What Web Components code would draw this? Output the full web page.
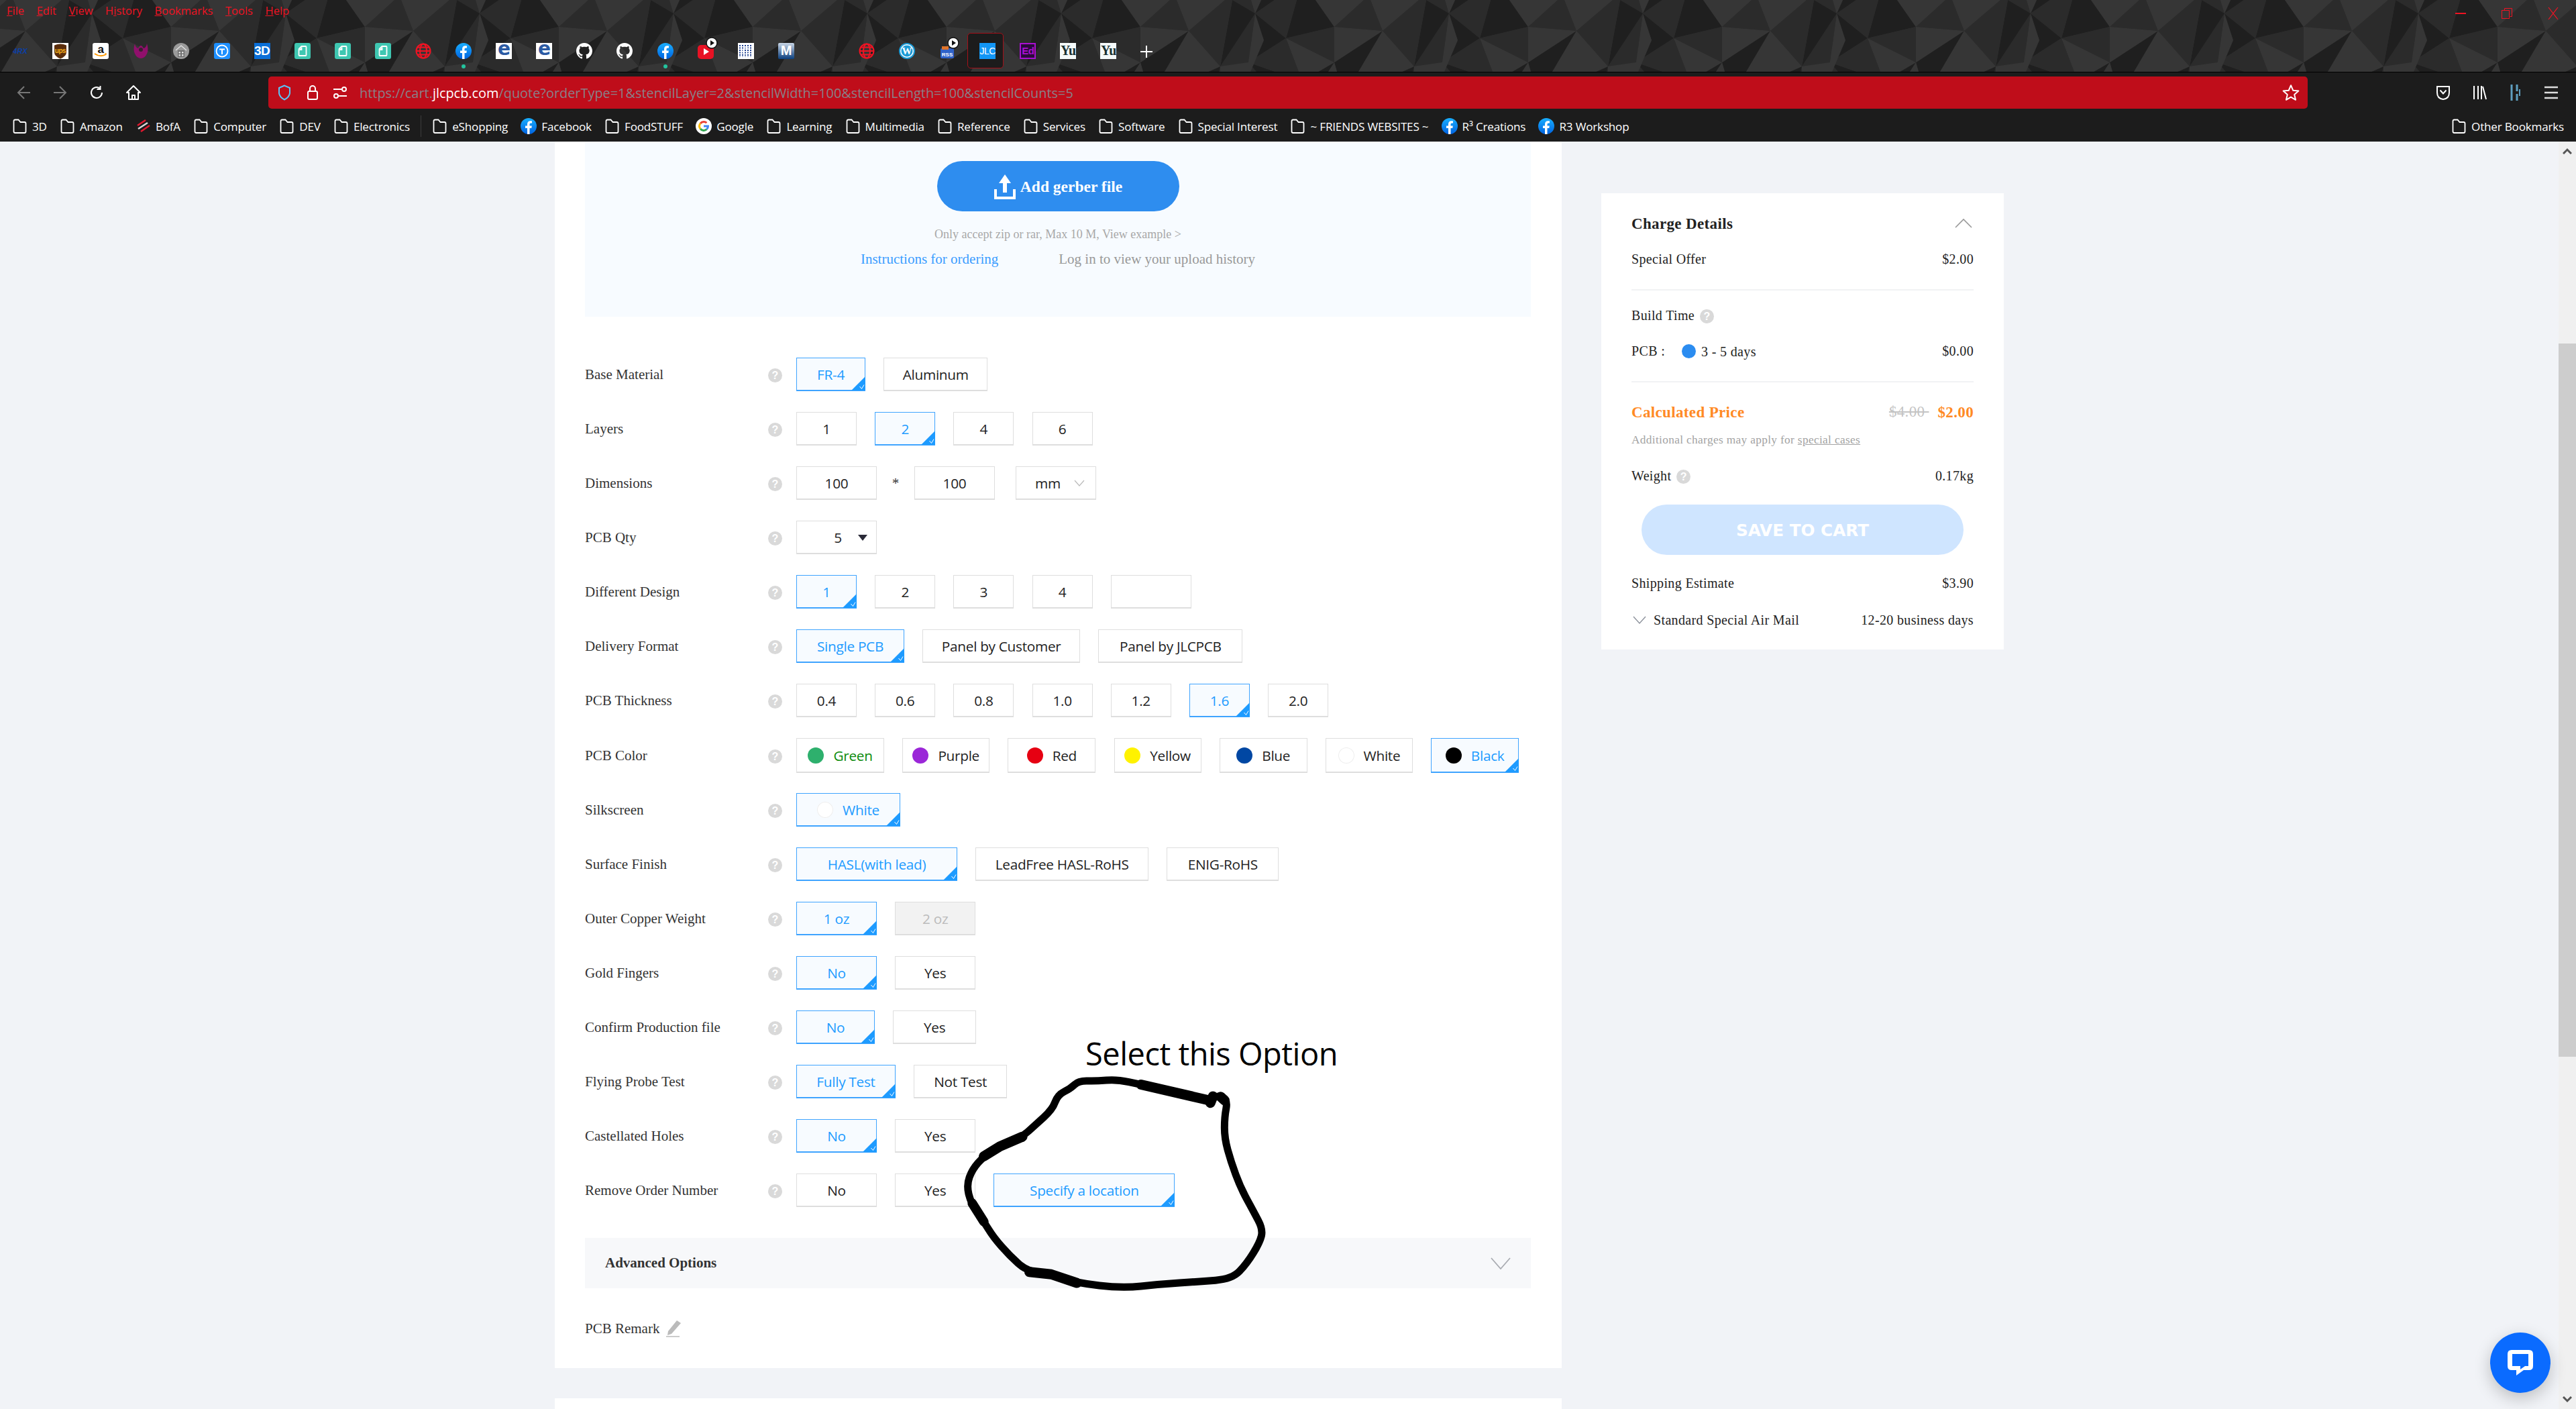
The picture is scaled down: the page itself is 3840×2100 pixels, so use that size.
<!DOCTYPE html>
<html>
<head>
<meta charset="utf-8">
<title>JLCPCB quote</title>
<style>
  html, body { margin: 0; padding: 0; width: 3840px; height: 2100px; overflow: hidden; background: #f1f3f7; }
  browser-chrome, quote-page { display: block; }
</style>
</head>
<body>
<browser-chrome></browser-chrome>
<quote-page>
  <upload-panel></upload-panel>

  <spec-row label="Base Material"><opt-btn w="103" on>FR-4</opt-btn><opt-btn w="155">Aluminum</opt-btn></spec-row>
  <spec-row label="Layers"><opt-btn w="90">1</opt-btn><opt-btn w="90" on>2</opt-btn><opt-btn w="90">4</opt-btn><opt-btn w="90">6</opt-btn></spec-row>
  <spec-row label="Dimensions" style="--gap:0px"><opt-btn w="120">100</opt-btn><dim-star></dim-star><opt-btn w="120">100</opt-btn><opt-btn w="120" style="margin-left:31px" caret="chev">mm</opt-btn></spec-row>
  <spec-row label="PCB Qty"><opt-btn w="120" caret="solid">5</opt-btn></spec-row>
  <spec-row label="Different Design"><opt-btn w="90" on>1</opt-btn><opt-btn w="90">2</opt-btn><opt-btn w="90">3</opt-btn><opt-btn w="90">4</opt-btn><opt-btn w="120"></opt-btn></spec-row>
  <spec-row label="Delivery Format"><opt-btn w="161" on>Single PCB</opt-btn><opt-btn w="235">Panel by Customer</opt-btn><opt-btn w="215">Panel by JLCPCB</opt-btn></spec-row>
  <spec-row label="PCB Thickness"><opt-btn w="90">0.4</opt-btn><opt-btn w="90">0.6</opt-btn><opt-btn w="90">0.8</opt-btn><opt-btn w="90">1.0</opt-btn><opt-btn w="90">1.2</opt-btn><opt-btn w="90" on>1.6</opt-btn><opt-btn w="90">2.0</opt-btn></spec-row>
  <spec-row label="PCB Color" tall>
    <opt-btn w="131" h="52" dot="#2eb06d" ink="#0a8a0a">Green</opt-btn><opt-btn w="130" h="52" dot="#9b27d8">Purple</opt-btn><opt-btn w="131" h="52" dot="#e60012">Red</opt-btn><opt-btn w="130" h="52" dot="#fff200">Yellow</opt-btn><opt-btn w="131" h="52" dot="#0047a3">Blue</opt-btn><opt-btn w="130" h="52" dot="#ffffff">White</opt-btn><opt-btn w="131" h="52" dot="#000000" on>Black</opt-btn>
  </spec-row>
  <spec-row label="Silkscreen"><opt-btn w="155" dot="#ffffff" on>White</opt-btn></spec-row>
  <spec-row label="Surface Finish"><opt-btn w="240" on>HASL(with lead)</opt-btn><opt-btn w="258">LeadFree HASL-RoHS</opt-btn><opt-btn w="167">ENIG-RoHS</opt-btn></spec-row>
  <spec-row label="Outer Copper Weight"><opt-btn w="120" on>1 oz</opt-btn><opt-btn w="120" off>2 oz</opt-btn></spec-row>
  <spec-row label="Gold Fingers"><opt-btn w="120" on>No</opt-btn><opt-btn w="120">Yes</opt-btn></spec-row>
  <spec-row label="Confirm Production file"><opt-btn w="117" on>No</opt-btn><opt-btn w="124">Yes</opt-btn></spec-row>
  <spec-row label="Flying Probe Test"><opt-btn w="148" on>Fully Test</opt-btn><opt-btn w="139">Not Test</opt-btn></spec-row>
  <spec-row label="Castellated Holes"><opt-btn w="120" on>No</opt-btn><opt-btn w="120">Yes</opt-btn></spec-row>
  <spec-row label="Remove Order Number"><opt-btn w="120">No</opt-btn><opt-btn w="120">Yes</opt-btn><opt-btn w="270" on>Specify a location</opt-btn></spec-row>

  <advanced-bar slot="tail"></advanced-bar>
  <remark-row slot="tail"></remark-row>

  <charge-card slot="side"></charge-card>
</quote-page>
<anno-layer></anno-layer>
<chat-fab></chat-fab>

<script>
class ShadowBase extends HTMLElement {
  constructor() {
    super();
    this.attachShadow({ mode: "open" });
  }
  connectedCallback() {
    this.render();
  }
  render() {
    const template = document.createElement('template');
    template.innerHTML = `<style>${this.getStyles()}</style>${this.getTemplate()}`;
    this.shadowRoot.appendChild(template.content.cloneNode(true));
  }
}

const FOLDER = `<svg width="23" height="24" viewBox="0 0 23 24"><path d="M2.5 4.5q0-2 2-2h5l3 3.5h6q2 0 2 2v12q0 2-2 2h-14q-2 0-2-2z" fill="none" stroke="#fff" stroke-width="1.8"/></svg>`;
const FB = `<svg width="24" height="24" viewBox="0 0 24 24"><defs><linearGradient id="fb" x1="0" y1="0" x2="0" y2="1"><stop offset="0" stop-color="#19afff"/><stop offset="1" stop-color="#0062e0"/></linearGradient></defs><circle cx="12" cy="12" r="12" fill="url(#fb)"/><path d="M10 24v-9H7v-3.500h3V9c0-3 1.800-4.700 4.500-4.700 1.300 0 2.500.2 2.500.2v3h-1.500c-1.500 0-2 .9-2 1.900v2.100h3.300l-.5 3.500h-2.800v9z" fill="#fff"/></svg>`;
const GH = `<svg width="24" height="24" viewBox="0 0 16 16"><path fill="#fff" d="M8 0C3.580 0 0 3.580 0 8c0 3.540 2.290 6.530 5.470 7.590.4.070.55-.17.55-.38 0-.19-.01-.82-.01-1.490-2.010.37-2.530-.49-2.690-.94-.09-.23-.48-.94-.82-1.130-.28-.15-.68-.52-.01-.53.63-.01 1.080.58 1.230.82.720 1.210 1.870.870 2.330.660.070-.52.280-.870.510-1.070-1.780-.2-3.640-.89-3.640-3.950 0-.87.310-1.590.820-2.150-.08-.2-.36-1.020.08-2.120 0 0 .67-.21 2.200.820.640-.18 1.320-.27 2-.27s1.360.09 2 .27c1.530-1.040 2.200-.820 2.200-.820.440 1.100.160 1.920.080 2.120.510.560.820 1.270.820 2.150 0 3.070-1.870 3.750-3.650 3.950.290.250.540.730.540 1.480 0 1.070-.01 1.930-.01 2.200 0 .210.150.460.550.380A8 8 0 0 0 16 8c0-4.420-3.580-8-8-8z"/></svg>`;
const GLOBE = `<svg width="24" height="24" viewBox="0 0 24 24" fill="none" stroke="#f01323" stroke-width="2"><circle cx="12" cy="12" r="10.500"/><ellipse cx="12" cy="12" rx="5" ry="10.500"/><path d="M1.500 12h21M3 6.500h18M3 17.500h18"/></svg>`;
const PAGE = `<span class="sq" style="background:#3fc7b2"><svg width="24" height="24" viewBox="0 0 24 24"><path d="M7.500 8l3-3h6q1 0 1 1v12q0 1-1 1h-9q-1 0-1-1v-9z M10 10h-1.500l2-2v2z" fill="none" stroke="#fff" stroke-width="1.800"/></svg></span>`;
const PLAY = `<svg class="play" width="18" height="18" viewBox="0 0 18 18"><circle cx="9" cy="9" r="8" fill="#fff" stroke="#111" stroke-width="1.500"/><path d="M7 5l6 4-6 4z" fill="#111"/></svg>`;

const TAB_ICONS = {
  rx: `<span class="txt" style="color:#0b3fa8;font:italic bold 11px 'Liberation Sans',sans-serif;">4RX</span>`,
  ups: `<span class="sq" style="background:#fff;border-radius:0"><svg width="24" height="24" viewBox="0 0 24 24"><path d="M3 3.500Q12-.5 21 3.500V14q0 6-9 9.500Q3 20 3 14z" fill="#5a2d0c"/><text x="12" y="15" text-anchor="middle" font-family="Liberation Sans,sans-serif" font-weight="700" font-size="10" fill="#f6b221">ups</text></svg></span>`,
  amazon: `<span class="sq" style="background:#fff"><svg width="24" height="24" viewBox="0 0 24 24"><text x="12" y="15" text-anchor="middle" font-family="Liberation Sans,sans-serif" font-weight="700" font-size="17" fill="#111">a</text><path d="M3 16q9 6 17 1" fill="none" stroke="#f90" stroke-width="2"/><path d="M18 15l3 .5-1 3z" fill="#f90"/></svg></span>`,
  phoenix: `<svg width="24" height="24" viewBox="0 0 24 24"><path d="M3 1q1 6 5 7 2-4 4-4t4 4q4-1 5-7 3 9 0 15-3 7-9 7T3 16Q0 10 3 1z" fill="#90106c"/><circle cx="12" cy="10" r="3" fill="#3a2030"/></svg>`,
  home: `<svg width="24" height="24" viewBox="0 0 24 24"><circle cx="12" cy="12" r="12" fill="#9a9a9a"/><path d="M4 11l8-7 8 7" fill="none" stroke="#e8e8e8" stroke-width="1.200"/><rect x="7" y="11" width="10" height="10" fill="#6f6f6f"/><path d="M8.500 13h2.500v2.500H8.500zM13 13h2.500v2.500H13zM8.500 17h2.500v2.500H8.500zM13 17h2.500v2.500H13z" fill="#e0e0e0"/></svg>`,
  tcircle: `<span class="sq" style="background:#1e90ff"><svg width="24" height="24" viewBox="0 0 24 24"><circle cx="12" cy="12" r="8.500" fill="none" stroke="#fff" stroke-width="1.800"/><path d="M8 8.500h8v2h-3V17h-2v-6.500H8z" fill="#fff"/></svg></span>`,
  d3: `<span class="sq" style="background:#0a6fd8;border-radius:0;color:#fff;font:700 19px 'Liberation Sans',sans-serif;">3D</span>`,
  page: PAGE,
  globe: GLOBE,
  fb: FB + `<i class="dot"></i>`,
  e: `<span class="sq" style="background:#fff;border-radius:0;color:#2b5aa3;font:700 28px/24px 'DejaVu Sans',sans-serif;padding-bottom:5px;box-sizing:border-box;">e</span>`,
  gh: GH,
  yt: `<svg width="24" height="24" viewBox="0 0 24 24"><rect x="0" y="3" width="24" height="21" rx="5" fill="#e81224"/><path d="M9 8l8 5-8 5z" fill="#fff"/></svg>` + PLAY,
  irs: `<span class="sq" style="background:#fff;border-radius:0"><svg width="24" height="24" viewBox="0 0 24 24"><g fill="none" stroke="#1d3f8f" stroke-width="2" stroke-dasharray="2 1.500"><path d="M3 3v18M7 3v18M11 3v18M15 3v18M19 3v18"/></g><circle cx="12" cy="12" r="5" fill="none" stroke="#fff" stroke-width="1"/></svg></span>`,
  m: `<span class="sq" style="background:linear-gradient(#c9d6e6,#0b3f7e);border-radius:2px;color:#fff;font:700 20px 'Liberation Sans',sans-serif;">M</span>`,
  wp: `<svg width="24" height="24" viewBox="0 0 24 24"><circle cx="12" cy="12" r="11" fill="#fff" stroke="#1a9ad6" stroke-width="2"/><circle cx="12" cy="12" r="8.500" fill="#1a9ad6"/><text x="12" y="17" text-anchor="middle" font-family="Liberation Serif,serif" font-weight="700" font-size="15" fill="#fff">W</text></svg>`,
  rss: `<svg width="24" height="24" viewBox="0 0 24 24"><rect x="2" y="8" width="20" height="15" rx="2" fill="#2f62c8"/><rect x="4" y="5" width="10" height="5" fill="#e0742a"/><text x="12" y="20" text-anchor="middle" font-family="Liberation Sans,sans-serif" font-weight="700" font-size="8" fill="#fff">RSS</text></svg>` + PLAY,
  jlc: `<span class="sq" style="background:#1296f5;border-radius:0;color:#fff;font:400 14px 'Liberation Sans',sans-serif;">JLC</span>`,
  ed: `<span class="sq" style="background:#2a0a3a;border:2px solid #a80fd0;box-sizing:border-box;border-radius:0;color:#a80fd0;font:700 15px 'Liberation Sans',sans-serif;">Ed</span>`,
  yu: `<span class="sq" style="background:#f5fafa;border-radius:0;color:#173030;font:700 20px 'Liberation Serif',serif;">Yu</span>`
};

class TabIcon extends ShadowBase {
  getTemplate() {
    return `<div class="ic">${TAB_ICONS[this.getAttribute('kind')]}</div>`;
  }
  getStyles() {
    return `
      :host { display: flex; align-items: center; justify-content: center; width: 60.100px; height: 53px; flex: none; position: relative; }
      :host([active]) .ic::before { content: ""; position: absolute; left: -18px; top: -15px; width: 52px; height: 51px; background: #1c1c1c; border: 1px solid #a51019; border-radius: 5px; }
      .ic { position: relative; width: 24px; height: 24px; display: flex; align-items: center; justify-content: center; }
      .ic > svg { position: relative; flex: none; }
      .ic > svg.play { position: absolute; right: -6px; top: -9px; }
      .sq { position: relative; width: 24px; height: 24px; flex: none; border-radius: 3px; display: flex; align-items: center; justify-content: center; letter-spacing: -.5px; }
      .txt { position: relative; }
      .dot { position: absolute; left: 9px; top: 32px; width: 6px; height: 6px; border-radius: 50%; background: #23c49e; }
    `;
  }
}
customElements.define('tab-icon', TabIcon);

class TabStrip extends ShadowBase {
  getTemplate() {
    const first = ['rx','ups','amazon','phoenix','home','tcircle','d3','page','page','page','globe','fb','e','e','gh','gh','fb','yt','irs','m'];
    const second = ['globe','wp','rss','jlc','ed','yu','yu'];
    const row = list => list.map(k => `<tab-icon kind="${k}"${k === 'jlc' ? ' active' : ''}></tab-icon>`).join('');
    return `
      <svg class="poly" width="3840" height="107">
        <defs>
          <g id="t">
            <rect x="-20" y="0" width="340" height="107" fill="#2b2b2b"/>
            <path fill="#1f1f1f" d="M293 0L327 20L275 99ZM47 0L38 20L67 0ZM100 0L84 57L156 40L128 0ZM38 20L28 93L84 57ZM228 46L156 93L160 107L192 107ZM28 93L68 107L40 107ZM156 93L132 107L147 107ZM275 99L257 107L273 107Z"/>
            <path fill="#363636" d="M327 20L317 93L275 99L275 107L320 107L340 60ZM32 0L38 20L47 0ZM128 0L156 40L200 0ZM210 0L228 46L282 0ZM156 40L228 46L156 93ZM228 46L275 99L257 107L192 107ZM84 57L156 93L132 107L103 107ZM156 93L147 107L160 107Z"/>
            <path fill="#2b2b2b" d="M67 0L38 20L84 57L100 0ZM200 0L156 40L228 46L210 0ZM282 0L228 46L275 99L293 0ZM84 57L156 40L156 93ZM28 93L84 57L103 107L68 107Z"/>
          </g>
          <pattern id="low" patternUnits="userSpaceOnUse" x="99" y="0" width="289" height="107">
            <use href="#t"/><use href="#t" x="-289"/>
          </pattern>
        </defs>
        <rect width="3840" height="107" fill="url(#low)"/>
      </svg>
      <nav class="menu"><span><u>F</u>ile</span><span><u>E</u>dit</span><span><u>V</u>iew</span><span>H<u>i</u>story</span><span><u>B</u>ookmarks</span><span><u>T</u>ools</span><span><u>H</u>elp</span></nav>
      <div class="win">
        <svg width="16" height="16" viewBox="0 0 16 16"><path d="M0 8h16" stroke="#f01323" stroke-width="2"/></svg>
        <svg width="16" height="16" viewBox="0 0 16 16" fill="none" stroke="#f01323" stroke-width="1"><path d="M4.500 3.500V.5h11v12h-3"/><rect x=".5" y="3.500" width="11" height="12"/></svg>
        <svg width="16" height="20" viewBox="0 0 16 20"><path d="M1 1l14 18M15 1L1 19" stroke="#f01323" stroke-width="1.200"/></svg>
      </div>
      <div class="tabs">${row(first)}<span class="gap"></span>${row(second)}
        <svg class="plus" width="20" height="20" viewBox="0 0 20 20"><path d="M10 1v18M1 10h18" stroke="#fff" stroke-width="2"/></svg>
      </div>
    `;
  }
  getStyles() {
    return `
      :host { display: block; position: relative; height: 107px; background: #2b2b2b; border-bottom: 1px solid #000; overflow: hidden; }
      .poly { position: absolute; left: 0; top: 0; }
      .menu { position: relative; display: flex; gap: 18.500px; padding: 4px 0 0 10px; font: 16.500px/24px "Open Sans", sans-serif; color: #f01323; }
      .win { position: absolute; right: 26px; top: 10px; display: flex; gap: 53px; align-items: center; }
      .tabs { position: absolute; left: 0; top: 49px; display: flex; }
      .gap { width: 60px; flex: none; }
      .plus { align-self: center; margin-left: 16px; margin-top: 2px; }
    `;
  }
}
customElements.define('tab-strip', TabStrip);

class NavBar extends ShadowBase {
  getTemplate() {
    return `
      <svg class="nb" width="20" height="22" viewBox="0 0 20 22" style="margin-left:25px"><path d="M11 2L2 11l9 9M2 11h18" fill="none" stroke="#777" stroke-width="2"/></svg>
      <svg class="nb" width="20" height="22" viewBox="0 0 20 22" style="margin-left:35px"><path d="M9 2l9 9-9 9M18 11H0" fill="none" stroke="#777" stroke-width="2"/></svg>
      <svg class="nb" width="22" height="22" viewBox="0 0 22 22" style="margin-left:33px"><path d="M19 11a8 8 0 1 1-3-6.200M16.500 1v5h-5" fill="none" stroke="#fff" stroke-width="2"/></svg>
      <svg class="nb" width="24" height="24" viewBox="0 0 24 24" style="margin-left:32px"><path d="M12 2L2 12h3v10h14V12h3zM10 22v-6h4v6" fill="none" stroke="#fff" stroke-width="2" stroke-linejoin="round"/></svg>
      <div class="url">
        <svg width="20" height="24" viewBox="0 0 20 24" style="margin-left:14px"><path d="M10 1.500L2 5v8q1 6 8 9.500 7-3.500 8-9.500V5z" fill="none" stroke="#5bc3f5" stroke-width="2"/></svg>
        <svg width="18" height="24" viewBox="0 0 18 24" style="margin-left:23px"><rect x="2" y="10" width="14" height="12" rx="2" fill="none" stroke="#fff" stroke-width="2"/><path d="M5 10V6a4 4 0 0 1 8 0v4" fill="none" stroke="#fff" stroke-width="2"/></svg>
        <svg width="22" height="20" viewBox="0 0 22 20" style="margin-left:21px"><g fill="none" stroke="#fff" stroke-width="2"><circle cx="17" cy="5" r="3"/><circle cx="5" cy="15" r="3"/><path d="M1 5h12M9 15h12"/></g></svg>
        <span class="addr">https://cart.<b>jlcpcb.com</b>/quote?orderType=1&amp;stencilLayer=2&amp;stencilWidth=100&amp;stencilLength=100&amp;stencilCounts=5</span>
        <svg class="star" width="26" height="26" viewBox="0 0 24 24"><path d="M12 2l3 7 7.500.7-5.700 5 1.700 7.300-6.500-3.900L5.500 22l1.700-7.300-5.700-5L9 9z" fill="none" stroke="#fff" stroke-width="1.800" stroke-linejoin="round"/></svg>
      </div>
      <div class="right">
        <svg width="22" height="24" viewBox="0 0 22 24"><path d="M2 3h18v9q0 9-9 10Q2 21 2 12z" fill="none" stroke="#fff" stroke-width="2"/><path d="M6.500 8.500l4.500 5 4.500-5" fill="none" stroke="#fff" stroke-width="2"/></svg>
        <svg width="22" height="24" viewBox="0 0 22 24" stroke="#fff" stroke-width="2"><path d="M3 2v20M9 2v20M14 2v20M16 3l5 19" fill="none"/></svg>
        <svg width="22" height="26" viewBox="0 0 22 26" stroke="#5f9fc0" stroke-width="3"><path d="M5 1v24M13 1v10M13 15v10" fill="none"/><path d="M17 8v10" stroke="#5f9fc0" stroke-width="2"/></svg>
        <svg width="20" height="22" viewBox="0 0 20 22" stroke="#ddd" stroke-width="2.500"><path d="M0 3h20M0 11h20M0 19h20"/></svg>
      </div>
    `;
  }
  getStyles() {
    return `
      :host { display: flex; align-items: center; position: relative; height: 57px; box-sizing: border-box; padding-top: 3px; background: #1c1c1c; }
      .url { width: 3040px; height: 48px; margin-left: 189px; background: #bf0d1a; border-radius: 5px; display: flex; align-items: center; position: relative; }
      .addr { margin-left: 18px; font: 19.900px "Open Sans", sans-serif; color: #8a8088; white-space: nowrap; }
      .addr b { font-weight: 400; color: #fff; }
      .star { margin-left: auto; margin-right: 12px; }
      .right { display: flex; align-items: center; margin-left: 191px; gap: 32px; }
      .right svg { flex: none; }
    `;
  }
}
customElements.define('nav-bar', NavBar);

class BookmarkItem extends ShadowBase {
  getTemplate() {
    const icon = this.getAttribute('icon');
    let svg = FOLDER;
    if (icon === 'fb') svg = FB;
    if (icon === 'bofa') svg = `<svg width="23" height="24" viewBox="0 0 23 24"><g stroke-width="2.500" fill="none"><path d="M3 11l12-8" stroke="#e2182f"/><path d="M4 16l14-9" stroke="#d9d9d9"/><path d="M8 20l13-9" stroke="#e2182f"/></g></svg>`;
    if (icon === 'g') svg = `<svg width="24" height="24" viewBox="0 0 24 24"><circle cx="12" cy="12" r="12" fill="#fff"/><path d="M12 5.500a6.500 6.500 0 0 1 4.400 1.700" fill="none" stroke="#ea4335" stroke-width="3"/><path d="M7 8a6.500 6.500 0 0 1 5-2.500" fill="none" stroke="#ea4335" stroke-width="3"/><path d="M7 8a6.500 6.500 0 0 0 0 8" fill="none" stroke="#fbbc05" stroke-width="3"/><path d="M7 16a6.500 6.500 0 0 0 9.500.7" fill="none" stroke="#34a853" stroke-width="3"/><path d="M16.500 16.700A6.500 6.500 0 0 0 18.500 12H12" fill="none" stroke="#4285f4" stroke-width="3"/></svg>`;
    return `${svg}<span><slot></slot></span>`;
  }
  getStyles() {
    return `
      :host { display: flex; align-items: center; gap: 7px; flex: none; }
      svg { flex: none; }
      span { white-space: nowrap; }
    `;
  }
}
customElements.define('bookmark-item', BookmarkItem);

class BookmarkBar extends ShadowBase {
  getTemplate() {
    return `
      <bookmark-item>3D</bookmark-item><bookmark-item>Amazon</bookmark-item><bookmark-item icon="bofa">BofA</bookmark-item><bookmark-item>Computer</bookmark-item><bookmark-item>DEV</bookmark-item><bookmark-item>Electronics</bookmark-item>
      <i class="sep"></i>
      <bookmark-item>eShopping</bookmark-item><bookmark-item icon="fb">Facebook</bookmark-item><bookmark-item>FoodSTUFF</bookmark-item><bookmark-item icon="g">Google</bookmark-item><bookmark-item>Learning</bookmark-item><bookmark-item>Multimedia</bookmark-item><bookmark-item>Reference</bookmark-item><bookmark-item>Services</bookmark-item><bookmark-item>Software</bookmark-item><bookmark-item>Special Interest</bookmark-item><bookmark-item>~ FRIENDS WEBSITES ~</bookmark-item><bookmark-item icon="fb">R³ Creations</bookmark-item><bookmark-item icon="fb">R3 Workshop</bookmark-item>
      <bookmark-item style="margin-left:auto;margin-right:18px">Other Bookmarks</bookmark-item>
    `;
  }
  getStyles() {
    return `
      :host { display: flex; align-items: center; gap: 19.200px; height: 46px; padding-left: 18px; background: #1c1c1c; color: #fff; font: 17.100px "Open Sans", sans-serif; letter-spacing: -.2px; }
      .sep { width: 1px; height: 32px; background: #3c3c3c; margin: 0 -3px; }
    `;
  }
}
customElements.define('bookmark-bar', BookmarkBar);

class BrowserChrome extends ShadowBase {
  getTemplate() {
    return `<tab-strip></tab-strip><nav-bar></nav-bar><bookmark-bar></bookmark-bar>`;
  }
  getStyles() {
    return `:host { display: block; height: 211px; }`;
  }
}
customElements.define('browser-chrome', BrowserChrome);

class HelpDot extends ShadowBase {
  getTemplate() { return `?`; }
  getStyles() {
    return `:host { display: inline-flex; align-items: center; justify-content: center; flex: none; width: 21px; height: 21px; border-radius: 50%; background: #d9d9d9; color: #fff; font: 700 16px "Liberation Sans", sans-serif; }`;
  }
}
customElements.define('help-dot', HelpDot);

class OptBtn extends ShadowBase {
  getTemplate() {
    const dot = this.getAttribute('dot');
    const caret = this.getAttribute('caret');
    const ink = this.getAttribute('ink');
    let tail = '';
    if (caret === 'chev') tail = `<svg class="chev" width="16" height="10" viewBox="0 0 16 10"><path d="M1 1l7 8 7-8" fill="none" stroke="#bbb" stroke-width="1.200"/></svg>`;
    if (caret === 'solid') tail = `<svg class="solid" width="14" height="9" viewBox="0 0 14 9"><path d="M0 0h14L7 9z" fill="#2a2a38"/></svg>`;
    return `
      <div class="in" style="${ink ? `color:${ink}` : ''}">
        ${dot ? `<i class="dot" style="background:${dot}${dot === '#ffffff' ? ';box-shadow:0 0 0 1px #eee inset' : ''}"></i>` : ''}
        <slot></slot>
        ${tail}
      </div>
      <svg class="mark" width="21" height="21" viewBox="0 0 21 21"><path d="M21 0v21H0z" fill="#1e9bff"/><path d="M12.500 15l3 3.500 3.500-6" fill="none" stroke="#fff" stroke-width="1"/></svg>
    `;
  }
  getStyles() {
    return `
      :host { display: block; position: relative; flex: none; box-sizing: border-box; height: ${this.getAttribute('h') || 50}px; width: ${this.getAttribute('w')}px; border: 1px solid #dedede; border-bottom: 2px solid #dedede; background: #fff; color: #222; font: 20.800px "Open Sans", sans-serif; letter-spacing: -.3px; }
      :host([on]) { border: 1px solid #3fa4ff; border-bottom: 2px solid #3fa4ff; background: #f7fbff; color: #1e9bff; }
      :host([off]) { background: #f2f2f2; color: #bbb; }
      .in { display: flex; align-items: center; justify-content: center; height: 100%; box-sizing: border-box; padding-top: 1px; white-space: nowrap; }
      .dot { width: 24px; height: 24px; border-radius: 50%; margin-right: 14px; flex: none; }
      .chev { margin-left: 20px; margin-right: -12px; }
      .solid { margin-left: 24px; margin-right: -42px; }
      .mark { position: absolute; right: -1px; bottom: -1px; display: none; }
      :host([on]) .mark { display: block; }
    `;
  }
}
customElements.define('opt-btn', OptBtn);

class DimStar extends ShadowBase {
  getTemplate() { return `*`; }
  getStyles() {
    return `:host { display: flex; align-items: center; justify-content: center; width: 56px; height: 44px; flex: none; font: 21px "Liberation Serif", serif; color: #333; }`;
  }
}
customElements.define('dim-star', DimStar);

class SpecRow extends ShadowBase {
  getTemplate() {
    return `<span class="lab">${this.getAttribute('label')}</span><help-dot></help-dot><div class="opts"><slot></slot></div>`;
  }
  getStyles() {
    return `
      :host { display: flex; align-items: center; height: 50px; margin-bottom: 31px; color: #333; font: 21px "Liberation Serif", serif; }
      :host([tall]) { height: 52px; margin-bottom: 30px; }
      .lab { width: 273px; flex: none; white-space: nowrap; padding-top: 1px; }
      help-dot { margin-top: 3px; }
      .opts { display: flex; align-items: center; margin-left: 21px; gap: var(--gap, 27.200px); }
    `;
  }
}
customElements.define('spec-row', SpecRow);

class UploadPanel extends ShadowBase {
  getTemplate() {
    return `
      <div class="btn">
        <svg width="34" height="40" viewBox="0 0 34 40"><path d="M17 2l9 13h-6v14h-6V15H8zM1 24h4v11h24V24h4v15H1z" fill="#fff"/></svg>
        <span class="lbl">Add gerber file</span>
      </div>
      <div class="hint">Only accept zip or rar, Max 10 M, View example &gt;</div>
      <div class="links"><a>Instructions for ordering</a><span>Log in to view your upload history</span></div>
    `;
  }
  getStyles() {
    return `
      :host { display: flex; flex-direction: column; align-items: center; height: 261px; background: #f7fbff; box-sizing: border-box; padding-top: 29px; margin-bottom: 61px; font-family: "Liberation Serif", serif; }
      .btn { display: flex; align-items: center; justify-content: center; gap: 6px; width: 361px; height: 75px; border-radius: 38px; background: #2e8def; color: #fff; font-weight: 700; font-size: 23.500px; }
      .lbl { padding-top: 2px; color: #fff; }
      .hint { margin-top: 23px; font-size: 18px; line-height: 22px; color: #a8a8a8; }
      .links { margin-top: 14px; display: flex; gap: 90px; font-size: 21px; line-height: 24px; }
      a { color: #3b9dff; }
      span { color: #999; }
    `;
  }
}
customElements.define('upload-panel', UploadPanel);

class AdvancedBar extends ShadowBase {
  getTemplate() {
    return `<span>Advanced Options</span><svg width="30" height="18" viewBox="0 0 30 18"><path d="M1 1l14 16L29 1" fill="none" stroke="#a9acb2" stroke-width="1.800"/></svg>`;
  }
  getStyles() {
    return `
      :host { display: flex; align-items: center; justify-content: space-between; height: 75px; margin-top: 46px; padding: 0 30px; background: #f7f8fa; font: 700 21px "Liberation Serif", serif; color: #333; }
    `;
  }
}
customElements.define('advanced-bar', AdvancedBar);

class RemarkRow extends ShadowBase {
  getTemplate() {
    return `<span>PCB Remark</span><svg width="24" height="26" viewBox="0 0 24 26"><path d="M16 1l6 4L8 21l-6 2 1-6z" fill="#bbb"/><path d="M0 25h20" stroke="#ccc" stroke-width="2"/></svg>`;
  }
  getStyles() {
    return `
      :host { display: flex; align-items: center; gap: 10px; height: 40px; margin-top: 40px; font: 21px "Liberation Serif", serif; color: #333; }
    `;
  }
}
customElements.define('remark-row', RemarkRow);

class ChargeRow extends ShadowBase {
  getTemplate() {
    return `<div><slot name="left"></slot></div><div><slot></slot></div>`;
  }
  getStyles() {
    return `
      :host { display: flex; align-items: center; justify-content: space-between; height: 40px; margin-top: ${this.getAttribute('mt') || 0}px; color: #222; white-space: nowrap; }
      div { display: flex; align-items: center; }
    `;
  }
}
customElements.define('charge-row', ChargeRow);

class ChargeCard extends ShadowBase {
  getTemplate() {
    return `
      <charge-row>
        <b slot="left">Charge Details</b>
        <svg width="26" height="16" viewBox="0 0 26 16" style="margin-right:2px"><path d="M1 14L13 2l12 12" fill="none" stroke="#999" stroke-width="1.600"/></svg>
      </charge-row>
      <charge-row mt="13"><span slot="left">Special Offer</span>$2.00</charge-row>
      <hr style="margin-top:25px">
      <charge-row mt="17"><span slot="left" class="il">Build Time<help-dot></help-dot></span></charge-row>
      <charge-row mt="13"><span slot="left" class="il"><span style="width:75px">PCB :</span><i class="dot"></i><span style="padding-top:2px">3 - 5 days</span></span>$0.00</charge-row>
      <hr style="margin-top:25px">
      <charge-row mt="24"><b slot="left" class="org">Calculated Price</b><span class="was">$4.00&nbsp;</span><b class="org">$2.00</b></charge-row>
      <charge-row mt="2"><span slot="left" class="small">Additional charges may apply for <u>special cases</u></span></charge-row>
      <charge-row mt="13"><span slot="left" class="il">Weight<help-dot></help-dot></span>0.17kg</charge-row>
      <div class="save">SAVE TO CART</div>
      <charge-row mt="22"><span slot="left">Shipping Estimate</span>$3.90</charge-row>
      <charge-row mt="15"><span slot="left" class="il"><svg width="20" height="12" viewBox="0 0 20 12" style="margin:0 11px 0 2px"><path d="M1 1l9 10 9-10" fill="none" stroke="#8a8f99" stroke-width="1.300"/></svg>Standard Special Air Mail</span>12-20 business days</charge-row>
    `;
  }
  getStyles() {
    return `
      :host { display: block; box-sizing: border-box; width: 600px; height: 680px; flex: none; margin: 77px 0 0 59px; padding: 25px 45px 0; background: #fff; font: 20px "Liberation Serif", serif; letter-spacing: .35px; }
      b { font-size: 23px; color: #222; padding-top: 1px; }
      hr { border: 0; height: 2px; background: #f1f2f4; margin: 0; }
      .il { display: flex; align-items: center; }
      .il help-dot { margin-left: 8px; margin-top: 3px; }
      .dot { width: 21px; height: 21px; border-radius: 50%; background: #2b8cf0; margin-right: 8px; }
      b.org { color: #ff8a25; }
      .was { color: #c4c4c4; text-decoration: line-through; margin-right: 13px; font-size: 23px; }
      .small { color: #a3a3a3; font-size: 17.300px; }
      .save { margin: 23px 15px 0; height: 75px; border-radius: 38px; background: #cfe5ff; color: #fff; display: flex; align-items: center; justify-content: center; box-sizing: border-box; padding-top: 2px; font: 700 24.700px "DejaVu Sans", sans-serif; letter-spacing: 0; }
    `;
  }
}
customElements.define('charge-card', ChargeCard);

class QuotePage extends ShadowBase {
  getTemplate() {
    return `
      <div class="card"><slot></slot><slot name="tail"></slot></div>
      <slot name="side"></slot>
      <div class="nextcard"></div>
      <div class="bar">
        <svg width="14" height="10" viewBox="0 0 14 10"><path d="M1 9l6-6 6 6" fill="none" stroke="#555" stroke-width="3"/></svg>
        <i class="thumb"></i>
        <svg width="14" height="10" viewBox="0 0 14 10" style="margin-top:auto"><path d="M1 1l6 6 6-6" fill="none" stroke="#555" stroke-width="3"/></svg>
      </div>
    `;
  }
  getStyles() {
    return `
      :host { display: flex !important; position: relative; height: 1889px; overflow: hidden; background: #f1f3f7; }
      .card { box-sizing: border-box; width: 1501px; height: 1828px; margin-left: 827px; padding: 0 46px 0 45px; background: #fff; flex: none; }
      .nextcard { position: absolute; left: 827px; top: 1873px; width: 1501px; height: 16px; background: #fff; }
      .bar { margin-left: auto; width: 26px; height: 100%; background: #f0f0f0; display: flex; flex-direction: column; align-items: center; padding: 9px 0; box-sizing: border-box; position: relative; }
      .thumb { position: absolute; left: 0; top: 301px; width: 26px; height: 1063px; background: #cdcdcd; }
    `;
  }
}
customElements.define('quote-page', QuotePage);

class AnnoLayer extends ShadowBase {
  smooth(p) {
    let d = `M${p[0][0]} ${p[0][1]}`;
    for (let i = 1; i < p.length - 1; i++) {
      const mx = (p[i][0] + p[i + 1][0]) / 2;
      const my = (p[i][1] + p[i + 1][1]) / 2;
      d += ` Q${p[i][0]} ${p[i][1]} ${mx} ${my}`;
    }
    const l = p[p.length - 1];
    return d + ` L${l[0]} ${l[1]}`;
  }
  getTemplate() {
    const loop = [[1005,385],[960,355],[900,325],[862,305],[830,312],[803,310],[790,340],[770,365],[762,420],[735,480],[715,525],[680,562],[655,600],[637,650],[628,710],[635,780],[655,850],[670,910],[695,980],[722,1040],[760,1052],[800,1085],[870,1105],[930,1090],[990,1080],[1042,1070],[1065,1010],[1085,930],[1090,880],[1075,810],[1055,720],[1040,620],[1030,530],[1030,450],[1035,385],[1020,365],[1008,385]];
    return `
      <svg class="ink" width="1500" height="610" viewBox="0 0 1568 1568" preserveAspectRatio="none">
        <g fill="none" stroke="#000" stroke-linecap="round" stroke-linejoin="round">
          <path d="${this.smooth(loop)}" stroke-width="11" vector-effect="non-scaling-stroke"/>
          <path d="M900 325L1005 385" stroke-width="15" vector-effect="non-scaling-stroke"/>
          <path d="M655 600L680 562L715 525" stroke-width="15" vector-effect="non-scaling-stroke"/>
          <path d="M726 1043L760 1052L800 1085" stroke-width="15" vector-effect="non-scaling-stroke"/>
          <path d="M637 780L655 850" stroke-width="14" vector-effect="non-scaling-stroke"/>
          <path d="M1012 370L1008 395" stroke-width="15" vector-effect="non-scaling-stroke"/>
          <path d="M1024 372L1030 385" stroke-width="15" vector-effect="non-scaling-stroke"/>
        </g>
      </svg>
      <div class="note">Select this Option</div>
    `;
  }
  getStyles() {
    return `
      :host { display: block; position: absolute; left: 0; top: 0; width: 3840px; height: 2100px; pointer-events: none; overflow: hidden; }
      .ink { position: absolute; left: 840px; top: 1490px; }
      .note { position: absolute; left: 1618px; top: 1538px; font: 47px/64px "Open Sans", sans-serif; color: #000; letter-spacing: -.5px; white-space: nowrap; }
    `;
  }
}
customElements.define('anno-layer', AnnoLayer);

class ChatFab extends ShadowBase {
  getTemplate() {
    return `<svg width="44" height="44" viewBox="0 0 44 44"><path d="M9 3h26q6 0 6 6v18q0 6-6 6h-8l-11 8v-8H9q-6 0-6-6V9q0-6 6-6z M10 9v18h12v5l7-5h5V9z" fill="#fff" fill-rule="evenodd"/></svg>`;
  }
  getStyles() {
    return `
      :host { display: flex; align-items: center; justify-content: center; position: absolute; left: 3712px; top: 1986px; width: 90px; height: 90px; border-radius: 50%; background: #0a6bff; box-shadow: 0 8px 24px rgba(0,0,0,.22); }
    `;
  }
}
customElements.define('chat-fab', ChatFab);
</script>
</body>
</html>
